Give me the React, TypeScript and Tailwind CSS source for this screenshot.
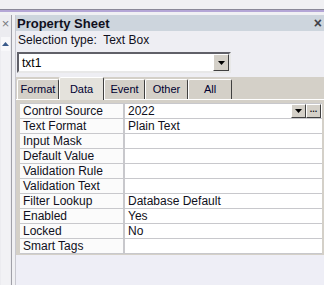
import React from "react";

const rows: [string, string][] = [
  ["Control Source", "2022"],
  ["Text Format", "Plain Text"],
  ["Input Mask", ""],
  ["Default Value", ""],
  ["Validation Rule", ""],
  ["Validation Text", ""],
  ["Filter Lookup", "Database Default"],
  ["Enabled", "Yes"],
  ["Locked", "No"],
  ["Smart Tags", ""],
];

const tabs = ["Format", "Data", "Event", "Other", "All"];
const tabWidths = ["w-[42px]", "w-[45px]", "w-[41px]", "w-[43px]", "w-[44px]"];

const Arrow = () => (
  <svg width="7" height="4" viewBox="0 0 7 4">
    <path d="M0 0h7L3.5 4z" fill="#000" />
  </svg>
);

const App = () => {
  return (
    <div
      className="w-[324px] h-[285px] overflow-hidden bg-[#eeeef3] flex flex-col text-[12px] text-[#101020]"
      style={{ fontFamily: '"Liberation Sans", Arial, sans-serif' }}
    >
      {/* top edge */}
      <div className="h-[9px] bg-[#f0f0f3]" />
      <div className="h-[1px] bg-[#8a8898]" />
      <div className="h-[2px] bg-[#b4a6d6]" />
      <div className="h-[3px] bg-[#f0f0f3]" />

      <div className="flex flex-1">
        {/* left collapsed pane */}
        <div className="w-[11px] flex flex-col bg-[#ececf0]">
          <div className="h-[16px] flex items-center justify-center text-[#7a7a80] text-[13px] leading-none">×</div>
          <div className="h-[6px]" />
          <div className="h-[14px] mx-[1px] bg-[#f8f8fa] flex items-center justify-center">
            <svg width="7" height="4" viewBox="0 0 7 4">
              <path d="M3.5 0L7 4H0z" fill="#3a5a8a" />
            </svg>
          </div>
          <div className="flex-1 mx-[1px] bg-[#f2f2f5]" />
        </div>
        <div className="w-[1px] bg-[#a0a0a8]" />
        <div className="w-[3px] bg-[#f0f0f3]" />

        {/* property sheet */}
        <div className="flex-1 flex flex-col border-l border-[#c8c8d0]">
          <div className="h-[16px] bg-[#cdd5dd] flex items-center justify-between pl-[1px] pr-[2px]">
            <span className="font-bold text-[13px] leading-none">Property Sheet</span>
            <span className="text-[#404048] text-[14px] font-bold leading-none">×</span>
          </div>
          <div className="h-[17px] pl-[2px] flex items-center leading-none">Selection type:&nbsp; Text Box</div>

          {/* combo */}
          <div className="mt-[4px] ml-[1px] w-[214px] h-[21px] bg-white border-2 border-t-[#606068] border-l-[#606068] border-r-[#e8e8e8] border-b-[#e8e8e8] flex">
            <div className="flex-1 pl-[3px] flex items-center leading-none text-[#000]">txt1</div>
            <div className="w-[16px] bg-[#d4d0c8] border border-t-white border-l-white border-r-[#404040] border-b-[#404040] flex items-center justify-center">
              <Arrow />
            </div>
          </div>

          {/* tabs */}
          <div className="mt-[4px] bg-[#d4d0c8] flex-1 flex flex-col">
            <div className="h-[23px] flex items-end pl-[1px] border-b border-white">
              {tabs.map((t, i) => {
                const sel = t === "Data";
                return (
                  <div
                    key={t}
                    className={`${tabWidths[i]} ${sel ? "h-[23px] bg-[#e4e2dc] -mb-[1px]" : "h-[20px]"} border-t border-l border-white border-r border-r-[#404040] rounded-t-[2px] flex items-center justify-center leading-none text-[11px] text-[#000030]`}
                  >
                    {t}
                  </div>
                );
              })}
            </div>
            <div className="pt-[3px] pl-[4px] pr-[2px] pb-0">
              <div className="border-t border-[#c8c8cc] bg-white">
                {rows.map(([k, v], i) => (
                  <div key={k} className="flex h-[15px] border-b border-[#c8c8cc] leading-none">
                    <div className="w-[105px] pl-[3px] flex items-center border-r-2 border-[#c8c8cc] bg-[#fbfbfb]">{k}</div>
                    <div className="flex-1 pl-[3px] flex items-center relative">
                      {v}
                      {i === 0 && (
                        <div className="absolute right-[1px] top-[0px] flex h-[14px]">
                          <div className="w-[15px] bg-[#d4d0c8] border border-t-white border-l-white border-r-[#404040] border-b-[#404040] flex items-center justify-center">
                            <Arrow />
                          </div>
                          <div className="w-[15px] bg-[#d4d0c8] border border-t-white border-l-white border-r-[#404040] border-b-[#404040] flex items-end justify-center pb-[3px]">
                            <span className="text-[9px] leading-none font-bold">...</span>
                          </div>
                        </div>
                      )}
                    </div>
                  </div>
                ))}
              </div>
            </div>
            <div className="flex-1 bg-[#eeeef6] mt-[1px]" />
          </div>
        </div>
      </div>
    </div>
  );
};

export default App;
